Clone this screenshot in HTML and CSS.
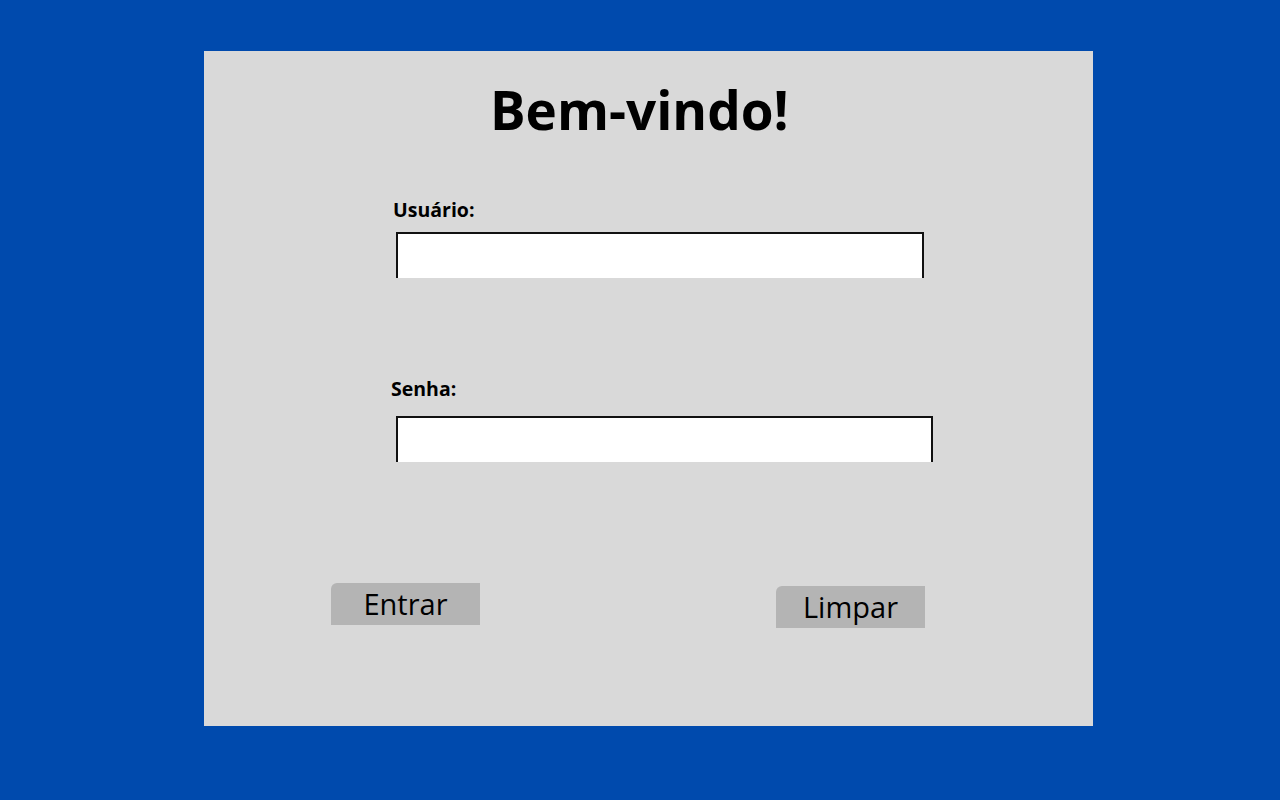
FILE: index.html
```html
<!DOCTYPE html>
<html lang="pt-BR">
<head>
<meta charset="utf-8">
<title>Bem-vindo!</title>
<link rel="stylesheet" href="styles.css">
</head>
<body>
  <main class="card">
    <h1 class="title">Bem-vindo!</h1>
    <form class="form">
      <div class="field field-user">
        <label class="label" for="usuario">Usuário:</label>
        <input class="input input-user" id="usuario" type="text">
      </div>
      <div class="field field-pass">
        <label class="label" for="senha">Senha:</label>
        <input class="input input-pass" id="senha" type="password">
      </div>
      <div class="actions">
        <button class="btn btn-enter" type="submit">Entrar</button>
        <button class="btn btn-clear" type="reset">Limpar</button>
      </div>
    </form>
  </main>
</body>
</html>
```

FILE: styles.css
```css
html, body {
  margin: 0;
  padding: 0;
}

body {
  background: #004aad;
  width: 1280px;
  height: 800px;
  overflow: hidden;
  font-family: "Open Sans", "Liberation Sans", sans-serif;
  color: #000;
}

.card {
  box-sizing: border-box;
  width: 889px;
  height: 675px;
  margin: 51px 0 0 204px;
  background: #d9d9d9;
  padding-top: 22px;
  display: flex;
  flex-direction: column;
}

.title {
  margin: 0;
  padding-left: 286px;
  font-size: 53px;
  font-weight: 700;
  line-height: normal;
}

.form {
  display: flex;
  flex-direction: column;
}

.field {
  display: flex;
  flex-direction: column;
  align-items: flex-start;
}

.field-user {
  margin-top: 51px;
  padding-left: 189px;
}

.field-pass {
  margin-top: 98px;
  padding-left: 187px;
}

.label {
  font-size: 19.5px;
  font-weight: 700;
  line-height: 26px;
}

.input {
  box-sizing: border-box;
  height: 46px;
  margin: 0;
  padding: 0 8px;
  background: #fff;
  border: 2px solid #111;
  border-bottom: none;
  border-radius: 0;
  outline: none;
  font: inherit;
}

.input-user {
  width: 528px;
  margin-top: 9px;
  margin-left: 3px;
}

.input-pass {
  width: 537px;
  margin-top: 14px;
  margin-left: 5px;
}

.actions {
  display: flex;
  align-items: flex-start;
  margin-top: 121px;
  padding: 0 168px 0 127px;
}

.btn {
  box-sizing: border-box;
  width: 149px;
  height: 42px;
  margin: 0;
  padding: 0;
  border: none;
  border-radius: 6px 0 0 0;
  background: #b4b4b4;
  color: #000;
  font-family: "Open Sans", "Liberation Sans", sans-serif;
  font-size: 29px;
  font-weight: 400;
  line-height: 40px;
  text-align: center;
  cursor: pointer;
}

.btn-clear {
  margin-left: auto;
  margin-top: 3px;
}
```
